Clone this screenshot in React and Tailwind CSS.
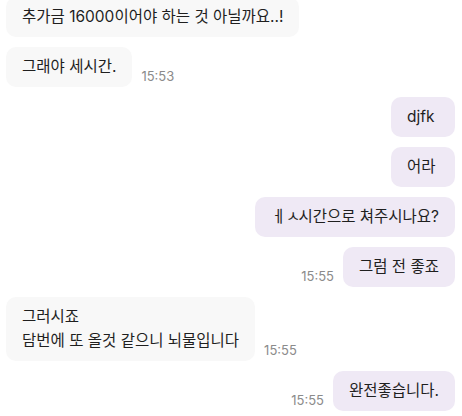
const messages = [
  { side: "left", lines: ["추가금 16000이어야 하는 것 아닐까요..!"] },
  { side: "left", lines: ["그래야 세시간."], time: "15:53" },
  { side: "right", lines: ["djfk"] },
  { side: "right", lines: ["어라"] },
  {
    side: "right",
    lines: [
      <>
        <span className="tracking-[-2px]">ㅔ ㅅ</span>시간으로 쳐주시나요?
      </>,
    ],
  },
  { side: "right", lines: ["그럼 전 좋죠"], time: "15:55" },
  { side: "left", lines: ["그러시죠", "담번에 또 올것 같으니 뇌물입니다"], time: "15:55" },
  { side: "right", lines: ["완전좋습니다."], time: "15:55" },
];

function Time({ value }) {
  return (
    <span className="text-[13px] leading-none text-[#8b8b8b] pb-[4px] shrink-0">
      {value}
    </span>
  );
}

export default function App() {
  return (
    <div
      className="w-[462px] h-[416px] overflow-hidden bg-white"
      style={{ fontFamily: "Inter, 'Noto Sans CJK KR', sans-serif" }}
    >
      <div className="flex flex-col gap-[10px] pl-[6px] pr-[7px] -mt-[3px]">
        {messages.map((m, i) => (
          <div
            key={i}
            className={`flex items-end gap-[9px] ${
              m.side === "right" ? "justify-end" : "justify-start"
            }`}
          >
            {m.side === "right" && m.time && <Time value={m.time} />}
            <div
              className={`min-w-[64px] rounded-[10px] px-4 py-2 text-[15.5px] leading-6 text-[#1f1f1f] ${
                m.side === "right" ? "bg-[#efe9f5]" : "bg-[#f8f8f8]"
              }`}
            >
              {m.lines.map((l, j) => (
                <div key={j}>{l}</div>
              ))}
            </div>
            {m.side === "left" && m.time && <Time value={m.time} />}
          </div>
        ))}
      </div>
    </div>
  );
}
